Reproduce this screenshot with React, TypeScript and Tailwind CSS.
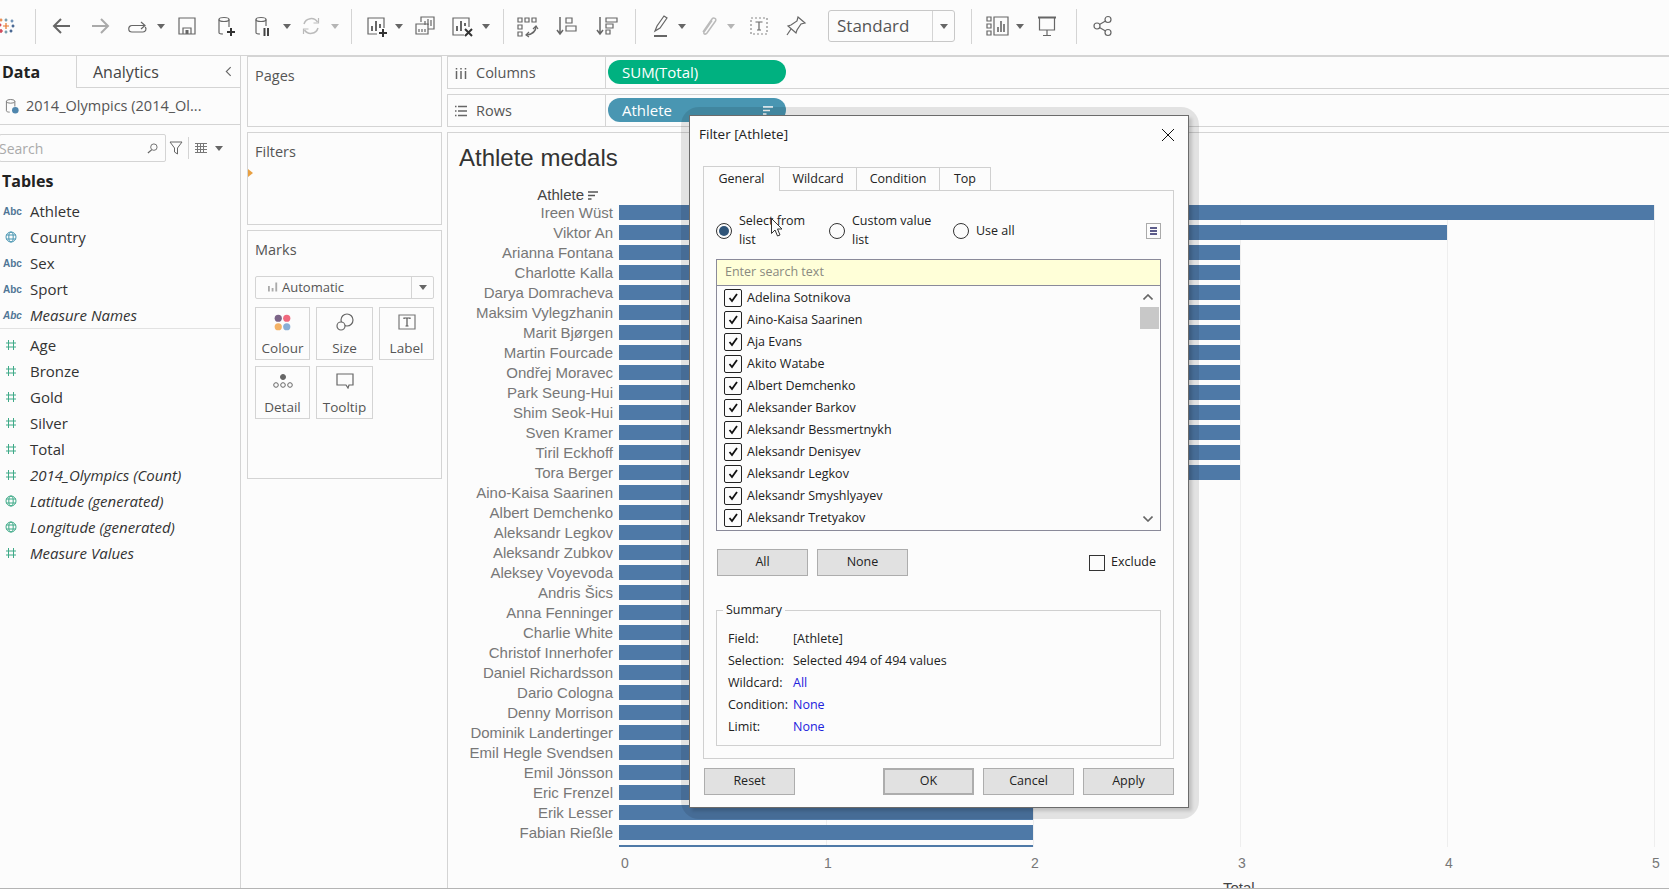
import type { ReactNode } from 'react';

const athletes: [string, number][] = [
  ['Ireen Wüst', 5],
  ['Viktor An', 4],
  ['Arianna Fontana', 3],
  ['Charlotte Kalla', 3],
  ['Darya Domracheva', 3],
  ['Maksim Vylegzhanin', 3],
  ['Marit Bjørgen', 3],
  ['Martin Fourcade', 3],
  ['Ondřej Moravec', 3],
  ['Park Seung-Hui', 3],
  ['Shim Seok-Hui', 3],
  ['Sven Kramer', 3],
  ['Tiril Eckhoff', 3],
  ['Tora Berger', 3],
  ['Aino-Kaisa Saarinen', 2],
  ['Albert Demchenko', 2],
  ['Aleksandr Legkov', 2],
  ['Aleksandr Zubkov', 2],
  ['Aleksey Voyevoda', 2],
  ['Andris Šics', 2],
  ['Anna Fenninger', 2],
  ['Charlie White', 2],
  ['Christof Innerhofer', 2],
  ['Daniel Richardsson', 2],
  ['Dario Cologna', 2],
  ['Denny Morrison', 2],
  ['Dominik Landertinger', 2],
  ['Emil Hegle Svendsen', 2],
  ['Emil Jönsson', 2],
  ['Eric Frenzel', 2],
  ['Erik Lesser', 2],
  ['Fabian Rießle', 2],
  ['Felix Loch', 2],
];

const listNames = [
  'Adelina Sotnikova',
  'Aino-Kaisa Saarinen',
  'Aja Evans',
  'Akito Watabe',
  'Albert Demchenko',
  'Aleksander Barkov',
  'Aleksandr Bessmertnykh',
  'Aleksandr Denisyev',
  'Aleksandr Legkov',
  'Aleksandr Smyshlyayev',
  'Aleksandr Tretyakov',
];

type FieldKind = 'abc' | 'geo' | 'num' | 'geoM';
const dimensions: [FieldKind, string, boolean][] = [
  ['abc', 'Athlete', false],
  ['geo', 'Country', false],
  ['abc', 'Sex', false],
  ['abc', 'Sport', false],
  ['abc', 'Measure Names', true],
];
const measures: [FieldKind, string, boolean][] = [
  ['num', 'Age', false],
  ['num', 'Bronze', false],
  ['num', 'Gold', false],
  ['num', 'Silver', false],
  ['num', 'Total', false],
  ['num', '2014_Olympics (Count)', true],
  ['geoM', 'Latitude (generated)', true],
  ['geoM', 'Longitude (generated)', true],
  ['num', 'Measure Values', true],
];

function Ico({ className = '', children }: { className?: string; children: ReactNode }) {
  return (
    <svg viewBox="0 0 24 24" fill="none" stroke="#666" strokeWidth="1.2" className={`h-6 w-6 shrink-0 ${className}`}>
      {children}
    </svg>
  );
}

function Caret({ className = '', light = false }: { className?: string; light?: boolean }) {
  return (
    <svg viewBox="0 0 8 5" className={`h-[5px] w-2 shrink-0 ${className}`}>
      <path d="M0 0h8L4 5z" fill={light ? '#b5b5b5' : '#666'} />
    </svg>
  );
}

function Sep({ className = '' }: { className?: string }) {
  return <div className={`h-[35px] w-px shrink-0 bg-[#d4d4d4] ${className}`} />;
}

function TableauLogo() {
  const plus = (x: number, y: number, r: number, c: string) => (
    <path key={`${x}-${y}`} d={`M${x - r} ${y}h${r * 2}M${x} ${y - r}v${r * 2}`} stroke={c} strokeWidth="1.2" />
  );
  return (
    <svg viewBox="0 0 15 16" className="h-4 w-[15px] shrink-0" fill="none">
      {plus(6, 8, 3, '#e8762c')}
      {plus(6, 2, 1.5, '#5b879b')}
      {plus(12, 3, 1.5, '#4e79a7')}
      {plus(13, 8, 1.5, '#1f447a')}
      {plus(11, 13, 1.5, '#1f447a')}
      {plus(6, 14, 1.5, '#59879b')}
      {plus(1, 13, 2, '#c72035')}
      {plus(0, 7, 1.5, '#c72035')}
      {plus(1, 2, 1.5, '#e8762c')}
    </svg>
  );
}

function Toolbar() {
  return (
    <div className="flex h-[56px] shrink-0 items-center border-b border-[#d4d4d4] pb-[3px]">
      <div className="flex w-[14px] shrink-0 justify-center">
        <TableauLogo />
      </div>
      <Sep className="ml-[21px]" />
      <Ico className="ml-[14px]">
        <path d="M20 12H5M11 5l-7 7 7 7" strokeWidth="2" />
      </Ico>
      <Ico className="ml-[14px]">
        <path d="M4 12h15M13 5l7 7-7 7" strokeWidth="2" stroke="#aaa" />
      </Ico>
      <Ico className="ml-[13px]">
        <path d="M20 11.5H7a3 3 0 0 0 0 6.5h11a3 3 0 0 0 2.2-5" />
        <path d="M16 8l4 3.500-4 3.500" />
      </Ico>
      <Caret className="ml-[8px]" />
      <Ico className="ml-[10px]">
        <path d="M4 4h16v16H4zM8 20v-6h8v6" />
        <path d="M10.500 16h3v4h-3z" fill="#666" stroke="none" />
      </Ico>
      <Ico className="ml-[15px]">
        <ellipse cx="10" cy="5.500" rx="5" ry="2" />
        <path d="M5 5.500v13c0 1 1.500 1.500 4 1.500M15 5.500V13" />
        <path d="M17 14v8M13 18h8" stroke="#333" strokeWidth="2" />
      </Ico>
      <Ico className="ml-[13px]">
        <ellipse cx="10" cy="5.500" rx="5" ry="2" />
        <path d="M5 5.500v13c0 1 1.500 1.500 4 1.500M15 5.500V12" />
        <path d="M13.500 14v8M17 14v8" stroke="#444" strokeWidth="2" />
      </Ico>
      <Caret className="ml-[8px]" />
      <Ico className="ml-[8px]">
        <path d="M5 10a7.500 7.500 0 0 1 13.500-2M19 14a7.500 7.500 0 0 1-13.500 2" stroke="#bbb" strokeWidth="1.500" />
        <path d="M19.500 4v5h-5M4.500 20v-5h5" stroke="#bbb" />
      </Ico>
      <Caret className="ml-[8px]" light />
      <Sep className="ml-[12px]" />
      <Ico className="ml-[12px]">
        <path d="M13 20H4V4h16v10" />
        <path d="M8 17v-5M12 17V7M16 14v-4" strokeWidth="2" />
        <path d="M19 15v8M15 19h8" stroke="#333" strokeWidth="2" />
      </Ico>
      <Caret className="ml-[7px]" />
      <Ico className="ml-[10px]">
        <path d="M8 8V3h13v12h-6" />
        <path d="M3 10h12v10H3z" />
        <path d="M12 11V7M15 11V5M18 12V6" />
        <path d="M6 18v-3M9 18v-3M12 18v-3" />
      </Ico>
      <Ico className="ml-[13px]">
        <path d="M14 21H3V4h16v9" />
        <path d="M7 17v-5M11 17V7M15 12V9" strokeWidth="2" />
        <path d="M15 15l7 7M22 15l-7 7" stroke="#333" strokeWidth="2" />
      </Ico>
      <Caret className="ml-[8px]" />
      <Sep className="ml-[13px]" />
      <Ico className="ml-[11px]">
        <path d="M3 4h4v4H3zM10 4h4v4h-4zM17 4h4v4h-4zM3 11h4v4H3zM3 18h4v4H3z" />
        <path d="M21 12c0 5-3 8-9 9" strokeWidth="1.500" />
        <path d="M18 15l3-3 2 3M14 18l-3 3 3 2" />
      </Ico>
      <Ico className="ml-[16px]">
        <path d="M5 3v17M2 16l3 4 3-4" strokeWidth="1.500" />
        <path d="M11 4h6v5h-6zM11 12h10v5H11z" />
      </Ico>
      <Ico className="ml-[16px]">
        <path d="M5 3v17M2 16l3 4 3-4" strokeWidth="1.500" />
        <path d="M11 4h11v4H11zM11 10h7v4h-7zM11 16h4v4h-4z" />
      </Ico>
      <Sep className="ml-[16px]" />
      <Ico className="ml-[13px]">
        <path d="M6 17l2-5 7-10 3 2-7 10z" />
        <path d="M5 22h13" stroke="#666" strokeWidth="2" />
      </Ico>
      <Caret className="ml-[5px]" />
      <Ico className="ml-[10px]">
        <path
          d="M7 18l9-13c1.500-2 5-.5 3.500 2L11 19c-1.500 2-4 1-3-1l8-11.500"
          stroke="#bbb"
          strokeWidth="1.500"
        />
      </Ico>
      <Caret className="ml-[7px]" light />
      <Ico className="ml-[12px]">
        <path d="M4 4h16v16H4z" strokeDasharray="2 2" stroke="#888" />
        <path d="M8.500 8h7M12 8v8M10 16h4" />
      </Ico>
      <Ico className="ml-[13px]">
        <path d="M14 3l7 6-4 1-4 6-1 3-8-7 3-1 6-4z" />
        <path d="M7 15l-4 6" />
      </Ico>
      <div className="ml-[20px] flex h-[32px] w-[127px] shrink-0 items-center rounded-[3px] border border-[#c8c8c8]">
        <span className="flex-1 pl-[8px] text-[17px] text-[#555]">Standard</span>
        <span className="flex h-full w-[22px] items-center justify-center border-l border-[#d4d4d4]">
          <Caret />
        </span>
      </div>
      <Sep className="ml-[16px]" />
      <Ico className="ml-[14px]">
        <path d="M1 3h4v4H1zM1 10h4v4H1zM1 17h4v4H1zM8 3h14v18H8z" />
        <path d="M12 18v-5M15 18V7M18 18v-8" strokeWidth="1.600" />
      </Ico>
      <Caret className="ml-[6px]" />
      <Ico className="ml-[11px]">
        <path d="M3 3.500h18" strokeWidth="2" />
        <path d="M4.500 4v12h15V4M12 16v5M8 21.500h8" />
      </Ico>
      <Sep className="ml-[17px]" />
      <Ico className="ml-[14px]">
        <circle cx="6" cy="12" r="3" />
        <circle cx="17" cy="5.500" r="3" />
        <circle cx="17" cy="18.500" r="3" />
        <path d="M8.500 10.500l6-3.500M8.500 13.500l6 3.500" />
      </Ico>
    </div>
  );
}

function FieldIcon({ kind }: { kind: FieldKind }) {
  if (kind === 'abc')
    return <span className="w-[30px] shrink-0 pl-[3px] font-['Liberation_Sans',sans-serif] text-[10px] font-bold text-[#4f7595]">Abc</span>;
  const color = kind === 'geo' ? '#4996b2' : '#3eaa88';
  return (
    <span className="w-[30px] shrink-0 pl-[5px]">
      {kind === 'num' ? (
        <svg viewBox="0 0 12 12" className="h-[12px] w-[12px]" stroke={color} fill="none" strokeWidth="1">
          <path d="M3.500 1v10M8.500 1v10M1 4h10M1 8h10" />
        </svg>
      ) : (
        <svg viewBox="0 0 12 12" className="h-[12px] w-[12px]" stroke={color} fill="none" strokeWidth="1">
          <circle cx="6" cy="6" r="5" />
          <ellipse cx="6" cy="6" rx="2.200" ry="5" />
          <path d="M1.200 4h9.600M1.200 8h9.600" />
        </svg>
      )}
    </span>
  );
}

function FieldRow({ kind, name, italic }: { kind: FieldKind; name: string; italic: boolean }) {
  return (
    <div className={`flex h-[26px] items-center text-[15px] text-[#333] ${italic ? 'italic' : ''}`}>
      <FieldIcon kind={kind} />
      <span>{name}</span>
    </div>
  );
}

function DataPane() {
  return (
    <div className="flex w-[241px] shrink-0 flex-col border-r border-[#d4d4d4]">
      <div className="flex h-[32px] shrink-0">
        <div className="flex w-[77px] items-center border-r border-[#d4d4d4] pl-[2px] text-[16px] font-bold text-[#222]">
          Data
        </div>
        <div className="flex flex-1 items-center justify-between border-b border-[#d4d4d4] pl-[16px] pr-[8px] text-[16px] text-[#444]">
          Analytics
          <svg viewBox="0 0 8 12" className="h-[11px] w-[7px]" fill="none" stroke="#666" strokeWidth="1.300">
            <path d="M6.500 1L1.500 6l5 5" />
          </svg>
        </div>
      </div>
      <div className="flex h-[37px] shrink-0 items-center border-b border-[#d4d4d4] pl-[5px] text-[14.5px] text-[#555]">
        <svg viewBox="0 0 16 18" className="mr-[6px] h-[17px] w-[15px] shrink-0" fill="none" stroke="#777" strokeWidth="1">
          <ellipse cx="6" cy="3.500" rx="4.500" ry="2" />
          <path d="M1.500 3.500v10c0 1 1.500 1.500 3.500 1.500M10.500 3.500V9" />
          <circle cx="11" cy="13" r="3.500" fill="#4f86ad" stroke="none" />
        </svg>
        2014_Olympics (2014_Ol...
      </div>
      <div className="flex h-[28px] shrink-0 items-center mt-[9px]">
        <div className="flex h-full w-[167px] shrink-0 items-center justify-between rounded-[2px] border border-[#d4d4d4] pr-[7px] text-[14px] text-[#aaa] -ml-px">
          <span className="-ml-[1px]">Search</span>
          <svg viewBox="0 0 12 12" className="h-[11px] w-[11px]" fill="none" stroke="#666" strokeWidth="1">
            <circle cx="7.500" cy="4.500" r="3.500" />
            <path d="M5 7.500L1 11" strokeWidth="1.400" />
          </svg>
        </div>
        <svg viewBox="0 0 14 14" className="ml-[3px] h-[14px] w-[14px]" fill="none" stroke="#666" strokeWidth="1">
          <path d="M1 1h12L8.500 7v6l-3-2V7z" />
        </svg>
        <div className="ml-[5px] h-[22px] w-px bg-[#d4d4d4]" />
        <svg viewBox="0 0 12 10" className="ml-[6px] h-[10px] w-[12px]" fill="none" stroke="#777" strokeWidth="1">
          <path d="M0 .5h12M0 3.500h12M0 6.500h12M0 9.500h12M2.500 0v10M5.500 0v10M8.500 0v10" />
        </svg>
        <Caret className="ml-[8px]" />
      </div>
      <div className="mt-[7px] flex h-[24px] items-center pl-[2px] text-[16px] font-bold text-[#222]">Tables</div>
      <div className="mt-[5px] border-b border-[#e2e2e2] pb-[-px]">
        {dimensions.map(([k, n, i]) => (
          <FieldRow key={n} kind={k} name={n} italic={i} />
        ))}
      </div>
      <div className="mt-[3px]">
        {measures.map(([k, n, i]) => (
          <FieldRow key={n} kind={k} name={n} italic={i} />
        ))}
      </div>
    </div>
  );
}

function MarkButton({ label, width, children }: { label: string; width: string; children: ReactNode }) {
  return (
    <div className={`flex h-[53px] flex-col items-center border border-[#d4d4d4] ${width}`}>
      <div className="flex h-[30px] items-center justify-center">{children}</div>
      <span className="text-[13.5px] leading-[22px] text-[#555]">{label}</span>
    </div>
  );
}

function ShelfColumn() {
  return (
    <div className="ml-[6px] flex w-[195px] shrink-0 flex-col">
      <div className="h-[71px] border border-[#d4d4d4] pl-[7px] pt-[8px] text-[14.5px] text-[#555]">Pages</div>
      <div className="relative mt-[5px] h-[93px] border border-[#d4d4d4] pl-[7px] pt-[8px] text-[14.5px] text-[#555]">
        Filters
        <span className="absolute left-0 top-[36px] h-0 w-0 border-y-[4px] border-l-[5px] border-y-transparent border-l-[#e8a042]" />
      </div>
      <div className="mt-[5px] h-[249px] border border-[#d4d4d4] px-[7px] pt-[8px] text-[14.5px] text-[#555]">
        <div>Marks</div>
        <div className="mt-[15px] flex h-[23px] items-center rounded-[2px] border border-[#d4d4d4] text-[13px]">
          <svg viewBox="0 0 12 10" className="ml-[12px] h-[10px] w-[11px]" fill="#aaa">
            <path d="M0 4h2v6H0zM4 6h2v4H4zM8 0h2v10H8z" />
          </svg>
          <span className="ml-[3px] flex-1">Automatic</span>
          <span className="flex h-full w-[22px] items-center justify-center border-l border-[#d4d4d4]">
            <Caret />
          </span>
        </div>
        <div className="mt-[8px] flex gap-[6px]">
          <MarkButton label="Colour" width="w-[55px]">
            <svg viewBox="0 0 16 16" className="h-[17px] w-[17px]">
              <circle cx="4" cy="4" r="3.400" fill="#7b6487" />
              <circle cx="12" cy="4" r="3.400" fill="#f0697e" />
              <circle cx="4" cy="12" r="3.400" fill="#f4b266" />
              <circle cx="12" cy="12" r="3.400" fill="#88aed6" />
            </svg>
          </MarkButton>
          <MarkButton label="Size" width="w-[57px]">
            <svg viewBox="0 0 18 18" className="h-[18px] w-[18px]" fill="none" stroke="#666" strokeWidth="1.200">
              <circle cx="11" cy="7" r="6" />
              <circle cx="5" cy="13" r="4" fill="#fcfcfc" />
            </svg>
          </MarkButton>
          <MarkButton label="Label" width="w-[55px]">
            <svg viewBox="0 0 18 16" className="h-[16px] w-[18px]" fill="none" stroke="#777" strokeWidth="1.200">
              <path d="M1 1h16v14H1z" />
              <path d="M6 5V4h6v1M9 4v8M7.500 12h3" stroke="#555" />
            </svg>
          </MarkButton>
        </div>
        <div className="mt-[6px] flex gap-[6px]">
          <MarkButton label="Detail" width="w-[55px]">
            <svg viewBox="0 0 20 14" className="h-[14px] w-[20px]" fill="none" stroke="#666" strokeWidth="1">
              <circle cx="10" cy="3" r="2.500" fill="#666" />
              <circle cx="3" cy="11" r="2.300" />
              <circle cx="10" cy="11" r="2.300" />
              <circle cx="17" cy="11" r="2.300" />
            </svg>
          </MarkButton>
          <MarkButton label="Tooltip" width="w-[57px]">
            <svg viewBox="0 0 18 16" className="h-[16px] w-[18px]" fill="none" stroke="#666" strokeWidth="1.200">
              <path d="M1 1h16v11h-4l-1 3-2-3H1z" />
            </svg>
          </MarkButton>
        </div>
      </div>
    </div>
  );
}

function Shelf({ icon, label, pill, color, sort }: { icon: ReactNode; label: string; pill: string; color: string; sort?: boolean }) {
  return (
    <div className="flex h-[33px] border-y border-[#d4d4d4] border-l">
      <div className="flex w-[158px] shrink-0 items-center border-r border-[#d4d4d4] pl-[7px] text-[14.5px] text-[#555]">
        <span className="flex w-[21px] shrink-0">{icon}</span>
        {label}
      </div>
      <div className={`ml-[2px] mt-[3px] flex h-[24px] w-[178px] items-center justify-between rounded-full pl-[14px] pr-[13px] text-[15px] text-white ${color}`}>
        {pill}
        {sort && <SortGlyph color="#fff" />}
      </div>
    </div>
  );
}

function SortGlyph({ color }: { color: string }) {
  return (
    <svg viewBox="0 0 10 9" className="h-[9px] w-[10px] shrink-0" stroke={color} strokeWidth="1.500">
      <path d="M0 1h10M0 4.500h7M0 8h3.500" />
    </svg>
  );
}

function BarChart() {
  const unit = 207;
  return (
    <div className="relative flex-1 border-l border-t border-[#d4d4d4]">
      <div className="h-[53px] pl-[11px] pt-[11px] font-['Liberation_Sans',sans-serif] text-[24px] leading-[28px] text-[#333]">
        Athlete medals
      </div>
      <div className="flex h-[19px] w-[150px] items-center justify-end font-['Liberation_Sans',sans-serif] text-[15px] text-[#444]">
        Athlete
        <span className="ml-[4px]">
          <SortGlyph color="#555" />
        </span>
      </div>
      <div className="relative h-[642px] overflow-hidden font-['Liberation_Sans',sans-serif] text-[15px] leading-[15px] text-[#777]">
        {[1, 2, 3, 4, 5].map((v) => (
          <div key={v} className="absolute bottom-0 top-0 w-px bg-[#eeeeee]" style={{ left: 171 + v * unit }} />
        ))}
        {athletes.map(([name, total]) => (
          <div key={name} className="relative flex h-[20px]">
            <div className="w-[165px] shrink-0 text-right">{name}</div>
            <div className="ml-[6px] h-[15px] bg-[#4e79a7]" style={{ width: total * unit }} />
          </div>
        ))}
      </div>
      <div className="relative font-['Liberation_Sans',sans-serif] text-[14px] text-[#777]">
        {[0, 1, 2, 3, 4, 5].map((v) => (
          <span key={v} className="absolute top-[6px] w-[10px] text-center" style={{ left: v === 0 ? 172 : 166 + v * unit + 2 }}>
            {v}
          </span>
        ))}
        <span className="absolute left-[775px] top-[30px] text-[15px] text-[#444]">Total</span>
      </div>
    </div>
  );
}

function DlgButton({ label, className = '' }: { label: string; className?: string }) {
  return (
    <div className={`flex h-[27px] w-[91px] items-center justify-center border border-[#adadad] bg-[#e1e1e1] ${className}`}>{label}</div>
  );
}

function Radio({ on }: { on?: boolean }) {
  return (
    <span className="flex h-4 w-4 shrink-0 items-center justify-center rounded-full border border-[#333]">
      {on && <span className="h-[10px] w-[10px] rounded-full bg-[#2f5478]" />}
    </span>
  );
}

function FilterDialog() {
  return (
    <>
      <div className="absolute left-[681px] top-[107px] h-[712px] w-[518px] rounded-[18px] bg-black/10" />
      <div className="absolute left-[689px] top-[115px] flex h-[693px] w-[500px] flex-col border border-[#6b6b6b] bg-[#fcfcfc] font-['Open_Sans',sans-serif] text-[12.5px] text-[#222] shadow-[3px_3px_3px_rgba(0,0,0,0.15)]">
        <div className="flex h-[36px] shrink-0 items-center justify-between pl-[9px] pr-[14px] pt-[1px] text-[13.5px]">
          Filter [Athlete]
          <svg viewBox="0 0 12 12" className="h-[12px] w-[12px]" stroke="#111" strokeWidth="1">
            <path d="M0 0l12 12M12 0L0 12" />
          </svg>
        </div>
        <div className="ml-[13px] mt-[13px] flex h-[25px] shrink-0 items-end">
          <div className="relative z-10 -mb-px flex h-[25px] w-[77px] items-center justify-center border border-b-0 border-[#d0d0d0] bg-[#fcfcfc]">General</div>
          <div className="flex h-[23px] w-[77px] items-center justify-center border border-l-0 border-b-0 border-[#d0d0d0]">Wildcard</div>
          <div className="flex h-[23px] w-[83px] items-center justify-center border border-l-0 border-b-0 border-[#d0d0d0]">Condition</div>
          <div className="flex h-[23px] w-[51px] items-center justify-center border border-l-0 border-b-0 border-[#d0d0d0]">Top</div>
        </div>
        <div className="ml-[13px] flex h-[569px] w-[471px] shrink-0 flex-col border border-[#d0d0d0] pl-[12px] pr-[12px]">
          <div className="mt-[31px] flex h-[18px] items-center">
            <span className="ml-[0px]"><Radio on /></span>
            <span className="ml-[7px] w-[86px]">Select from list</span>
            <span className="ml-[4px]"><Radio /></span>
            <span className="ml-[7px] w-[97px]">Custom value list</span>
            <span className="ml-[4px]"><Radio /></span>
            <span className="ml-[7px]">Use all</span>
            <span className="ml-auto flex h-4 w-[15px] flex-col items-center justify-center gap-[1.500px] border border-[#aaa]">
              <span className="h-[1.500px] w-[7px] bg-[#5c5c8a]" />
              <span className="h-[1.500px] w-[7px] bg-[#5c5c8a]" />
              <span className="h-[1.500px] w-[7px] bg-[#5c5c8a]" />
            </span>
          </div>
          <div className="mt-[19px] flex h-[272px] w-[445px] shrink-0 flex-col border border-[#8a8a9a]">
            <div className="flex h-[26px] shrink-0 items-center border-b border-[#8a8a9a] bg-[#ffffd8] pl-[8px] text-[#8a8a80]">
              Enter search text
            </div>
            <div className="relative flex-1 pl-[7px] pt-[1px]">
              {listNames.map((n) => (
                <div key={n} className="flex h-[22px] items-center">
                  <span className="flex h-[18px] w-[18px] shrink-0 items-center justify-center rounded-[2px] border border-[#222]">
                    <svg viewBox="0 0 10 10" className="h-[10px] w-[10px]" fill="none" stroke="#111" strokeWidth="1.800">
                      <path d="M1.500 5l2.500 3 5-7" />
                    </svg>
                  </span>
                  <span className="ml-[5px]">{n}</span>
                </div>
              ))}
              <svg viewBox="0 0 10 6" className="absolute right-[7px] top-[8px] h-[6px] w-[10px]" fill="none" stroke="#666" strokeWidth="1.600">
                <path d="M.5 5.500L5 1l4.500 4.500" />
              </svg>
              <div className="absolute right-[1px] top-[21px] h-[22px] w-[19px] bg-[#c8c8c8]" />
              <svg viewBox="0 0 10 6" className="absolute bottom-[8px] right-[7px] h-[6px] w-[10px]" fill="none" stroke="#666" strokeWidth="1.600">
                <path d="M.5.5L5 5l4.500-4.500" />
              </svg>
            </div>
          </div>
          <div className="mt-[18px] flex items-center">
            <DlgButton label="All" className="ml-px" />
            <DlgButton label="None" className="ml-[9px]" />
            <span className="ml-auto h-4 w-4 border border-[#333]" />
            <span className="ml-[6px] mr-[5px]">Exclude</span>
          </div>
          <div className="relative mt-[34px] h-[136px] w-[445px] shrink-0 border border-[#d0d0d0] pl-[11px] pt-[17px]">
            <span className="absolute -top-[10px] left-[6px] bg-[#fcfcfc] px-[3px]">Summary</span>
            <div className="grid grid-cols-[65px_1fr] auto-rows-[22px] items-center">
              <span>Field:</span>
              <span>[Athlete]</span>
              <span>Selection:</span>
              <span>Selected 494 of 494 values</span>
              <span>Wildcard:</span>
              <span className="text-[#2222dd]">All</span>
              <span>Condition:</span>
              <span className="text-[#2222dd]">None</span>
              <span>Limit:</span>
              <span className="text-[#2222dd]">None</span>
            </div>
          </div>
        </div>
        <div className="ml-[14px] mt-[9px] flex">
          <DlgButton label="Reset" />
          <DlgButton label="OK" className="ml-auto border-2 border-[#0078d7]" />
          <DlgButton label="Cancel" className="ml-[9px]" />
          <DlgButton label="Apply" className="ml-[9px] mr-[14px]" />
        </div>
      </div>
      <svg viewBox="0 0 11 19" className="absolute left-[771px] top-[218px] h-[19px] w-[11px]">
        <path d="M.5.5v15l3.500-3.500 2.500 6 2.500-1-2.500-6h4.500z" fill="#fcfcfc" stroke="#333" strokeWidth="1" />
      </svg>
    </>
  );
}

export default function App() {
  return (
    <div className="relative h-[889px] w-[1669px] overflow-hidden border-b border-[#b4b4b4] bg-[#fcfcfc] font-['Open_Sans',sans-serif]">
      <Toolbar />
      <div className="flex h-[832px]">
        <DataPane />
        <ShelfColumn />
        <div className="ml-[5px] flex min-w-0 flex-1 flex-col">
          <Shelf
            label="Columns"
            pill="SUM(Total)"
            color="bg-[#00b180]"
            icon={
              <svg viewBox="0 0 12 12" className="h-[12px] w-[12px]" stroke="#666" strokeWidth="1.500">
                <path d="M1.500 4v8M6 4v8M10.500 4v8M1.500 1v1.500M6 1v1.500M10.500 1v1.500" />
              </svg>
            }
          />
          <div className="h-[5px]" />
          <Shelf
            label="Rows"
            pill="Athlete"
            color="bg-[#4996b2]"
            sort
            icon={
              <svg viewBox="0 0 12 12" className="h-[12px] w-[12px]" stroke="#666" strokeWidth="1.500">
                <path d="M0 1.500h1.500M3 1.500h9M0 6h1.500M3 6h9M0 10.500h1.500M3 10.500h9" />
              </svg>
            }
          />
          <div className="h-[5px]" />
          <BarChart />
        </div>
      </div>
      <FilterDialog />
    </div>
  );
}
